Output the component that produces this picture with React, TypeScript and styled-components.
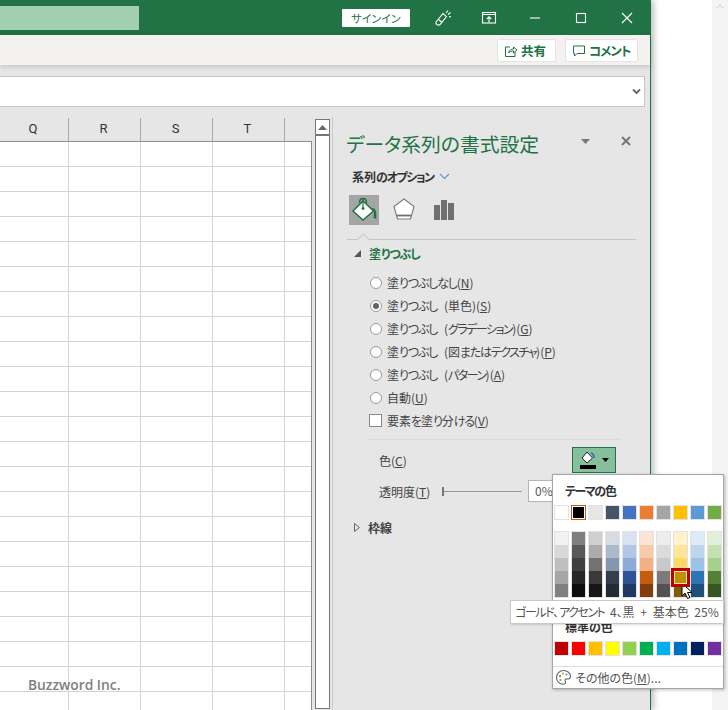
import React from 'react';
import styled, { createGlobalStyle } from 'styled-components';

const GlobalStyle = createGlobalStyle`
  html, body { margin: 0; padding: 0; background: #fff; }
  body {
    font-family: "Noto Sans CJK JP", "Noto Sans", "Liberation Sans", sans-serif;
    font-feature-settings: "palt";
  }
`;

const Page = styled.div`
  position: relative;
  width: 728px;
  height: 710px;
  overflow: hidden;
  display: flex;
  background: #fff;
`;

const Win = styled.div`
  width: 651px;
  height: 710px;
  flex: none;
  display: flex;
  flex-direction: column;
  background: #e6e6e6;
  border-right: 1px solid #217346;
  box-sizing: border-box;
  box-shadow: 3px 0 6px rgba(0, 0, 0, 0.25);
`;

const Gutter = styled.div`
  flex: 1;
`;

const RightStrip = styled.div`
  width: 16px;
  background: #f4f4f4;
  display: flex;
  justify-content: center;
  padding-top: 4px;
  box-sizing: border-box;
`;

const TitleBar = styled.div`
  height: 35px;
  flex: none;
  background: #217346;
  display: flex;
  align-items: center;
`;

const SearchBox = styled.div`
  width: 139px;
  height: 24px;
  flex: none;
  background: #a3cfb1;
  margin-right: 203px;
`;

const SignIn = styled.div`
  width: 68px;
  height: 18px;
  flex: none;
  background: #fff;
  border-radius: 1px;
  color: #217346;
  font-size: 11px;
  line-height: 18px;
  text-align: center;
  margin-right: 10px;
`;

const TitleIcon = styled.div`
  width: 46px;
  height: 35px;
  display: flex;
  align-items: center;
  justify-content: center;
  flex: none;
`;

const Ribbon = styled.div`
  height: 30px;
  flex: none;
  background: #f3f2f1;
  display: flex;
  justify-content: flex-end;
  align-items: flex-start;
  gap: 9px;
  padding: 4px 12px 0 0;
  box-sizing: border-box;
  box-shadow: 0 2px 5px rgba(0, 0, 0, 0.14);
  position: relative;
`;

const RibbonBtn = styled.div<{ $w: number }>`
  width: ${p => p.$w}px;
  height: 23px;
  background: #fff;
  border: 1px solid #e4e4e4;
  border-radius: 2px;
  box-sizing: border-box;
  display: flex;
  align-items: center;
  gap: 3px;
  padding-left: 6px;
  font-size: 12.5px;
  font-weight: 700;
  color: #217346;
`;

const TightLabel = styled.span`
  letter-spacing: -1px;
`;

const FormulaArea = styled.div`
  height: 52px;
  flex: none;
  padding: 11px 5px 0 0;
  box-sizing: border-box;
`;

const FormulaBox = styled.div`
  height: 31px;
  background: #fff;
  border: 1px solid #c6c6c6;
  border-left: none;
  box-sizing: border-box;
  display: flex;
  align-items: center;
  justify-content: flex-end;
  padding-right: 3px;
`;

const Body = styled.div`
  flex: 1;
  display: flex;
  min-height: 0;
`;

const SheetColumn = styled.div`
  width: 312px;
  flex: none;
  display: flex;
  flex-direction: column;
`;

const HeaderRow = styled.div`
  height: 25px;
  flex: none;
  display: grid;
  grid-template-columns: 69px 72px 72px 72px 27px;
  box-sizing: border-box;
  border-bottom: 1px solid #8e8e8e;
`;

const HeaderCell = styled.div`
  border-right: 1px solid #a9a9a9;
  margin-top: 1px;
  padding-right: 2px;
  font-family: "Roboto", "Liberation Sans", sans-serif;
  font-size: 13px;
  line-height: 22px;
  text-align: center;
  color: #333;
  &:last-child { border-right: none; }
`;

const Grid = styled.div`
  flex: 1;
  display: grid;
  grid-template-columns: 69px 72px 72px 72px 27px;
  grid-auto-rows: 25px;
  background: #fff;
  overflow: hidden;
  border-right: 1px solid #8e8e8e;
  box-sizing: border-box;
`;

const Cell = styled.div`
  border-right: 1px solid #d4d4d4;
  border-bottom: 1px solid #d4d4d4;
  box-sizing: border-box;
  &:nth-child(5n) { border-right: none; }
`;

const ScrollTrack = styled.div`
  width: 21px;
  flex: none;
  padding: 2px 3px 0;
  box-sizing: border-box;
  border-right: 1px solid #c9c9c9;
`;

const ScrollBar = styled.div`
  width: 15px;
  height: 590px;
  background: #fff;
  border: 1px solid #777;
  box-sizing: border-box;
`;

const ScrollBtn = styled.div`
  height: 14px;
  border-bottom: 2px solid #777;
  display: flex;
  align-items: center;
  justify-content: center;
`;

const Panel = styled.div`
  flex: 1;
  padding: 0 14px 0 14px;
  color: #444;
  font-size: 12px;
`;

const PanelHead = styled.div`
  height: 50px;
  display: flex;
  align-items: center;
  padding-top: 3px;
  box-sizing: border-box;
`;

const PanelTitle = styled.div`
  flex: 1;
  font-size: 19.8px;
  margin-left: -1px;
  color: #217346;
  white-space: nowrap;
`;

const HeadTools = styled.div`
  display: flex;
  align-items: center;
  gap: 31px;
  margin: -5px 5px 0 0;
`;

const OptionRow = styled.div`
  display: flex;
  align-items: center;
  gap: 6px;
  height: 18px;
  padding-left: 5px;
  font-size: 12px;
  font-weight: 700;
  color: #333;
`;

const TabRow = styled.div`
  display: flex;
  gap: 10px;
  margin: 10px 0 0 2px;
  height: 30px;
`;

const Tab = styled.div<{ $active?: boolean }>`
  width: 30px;
  height: 30px;
  display: flex;
  align-items: center;
  justify-content: center;
  background: ${p => (p.$active ? '#a5a5a5' : 'transparent')};
`;

const TabRule = styled.div`
  position: relative;
  height: 14px;
  border-bottom: 1px solid #c4c4c4;
  &::before {
    content: '';
    position: absolute;
    left: 12px;
    bottom: -5px;
    width: 8px;
    height: 8px;
    transform: rotate(45deg);
    background: #e6e6e6;
    border-left: 1px solid #c4c4c4;
    border-top: 1px solid #c4c4c4;
  }
`;

const SectionHead = styled.div<{ $green?: boolean }>`
  display: flex;
  align-items: center;
  gap: 8px;
  height: 20px;
  margin-top: 3px;
  padding-left: 7px;
  font-weight: 700;
  font-size: 12px;
  color: ${p => (p.$green ? '#217346' : '#444')};
`;

const FillList = styled.div`
  display: flex;
  flex-direction: column;
  padding: 8px 0 0 23px;
`;

const ChoiceRow = styled.div`
  height: 23px;
  display: flex;
  align-items: center;
  gap: 5px;
  white-space: nowrap;
  word-spacing: 4px;
  color: #444;
`;

const Radio = styled.span<{ $on?: boolean }>`
  width: 12px;
  height: 12px;
  border-radius: 50%;
  border: 1px solid #9a9a9a;
  background: #fff;
  box-sizing: border-box;
  display: flex;
  align-items: center;
  justify-content: center;
  flex: none;
  &::after {
    content: '';
    width: 6px;
    height: 6px;
    border-radius: 50%;
    background: ${p => (p.$on ? '#606060' : 'transparent')};
  }
`;

const Check = styled.span`
  width: 13px;
  height: 13px;
  border: 1px solid #8a8a8a;
  background: #fff;
  box-sizing: border-box;
  flex: none;
  margin-left: -1px;
`;

const Key = styled.span`
  text-decoration: underline;
`;

const Hira = styled.span`
  letter-spacing: -1.2px;
`;

const Kata = styled.span`
  letter-spacing: -1.5px;
`;

const ListRule = styled.div`
  height: 1px;
  background: #dcdcdc;
  margin: 7px 15px 0 21px;
`;

const ColorRow = styled.div`
  display: flex;
  align-items: center;
  height: 28px;
  margin-top: 6px;
  padding: 0 20px 0 32px;
  justify-content: space-between;
`;

const FillBtn = styled.div`
  width: 44px;
  height: 26px;
  background: #86bf9c;
  border: 1px solid #217346;
  box-sizing: border-box;
  display: flex;
  align-items: center;
  justify-content: center;
  gap: 5px;
`;

const OpacityRow = styled.div`
  display: flex;
  align-items: center;
  height: 22px;
  margin-top: 6px;
  padding-left: 32px;
`;

const OpacityLabel = styled.span`
  width: 63px;
  flex: none;
`;

const Slider = styled.div`
  width: 80px;
  height: 1px;
  flex: none;
  background: #999;
  margin-right: 6px;
  position: relative;
  &::before {
    content: '';
    position: absolute;
    left: 0;
    top: -4px;
    width: 2px;
    height: 9px;
    background: #777;
  }
`;

const PercentBox = styled.div`
  width: 40px;
  height: 22px;
  flex: none;
  background: #fff;
  border: 1px solid #b5b5b5;
  box-sizing: border-box;
  line-height: 20px;
  padding-left: 6px;
  color: #555;
`;

const BorderHead = styled(SectionHead)`
  margin-top: 15px;
`;

const Watermark = styled.div`
  position: absolute;
  left: 28px;
  top: 675px;
  font-family: "Open Sans", "Liberation Sans", sans-serif;
  font-size: 13.8px;
  font-weight: 600;
  color: #808080;
`;

const Popup = styled.div`
  position: absolute;
  left: 552px;
  top: 474px;
  width: 172px;
  height: 215px;
  background: #fff;
  border: 1px solid #a6a6a6;
  box-sizing: border-box;
  box-shadow: 1px 1px 3px rgba(0, 0, 0, 0.25);
  padding: 6px 0 0 2px;
`;

const PopupLabel = styled.div`
  font-size: 12px;
  font-weight: 700;
  color: #333;
  padding-left: 10px;
  height: 19px;
  line-height: 19px;
`;

const SwatchRow = styled.div`
  display: flex;
  gap: 4px;
`;

const ThemeSwatches = styled(SwatchRow)`
  margin-top: 6px;
`;

const StandardSwatches = styled(SwatchRow)`
  margin-top: 6px;
`;

const Swatch = styled.div<{ $selected?: boolean }>`
  width: 13px;
  height: 13px;
  flex: none;
  box-sizing: border-box;
  outline: 1px solid ${p => (p.$selected ? '#c55a11' : '#e2e2e2')};
  border: ${p => (p.$selected ? '1px solid #fff' : 'none')};
`;

const ShadeGrid = styled(SwatchRow)`
  margin-top: 13px;
`;

const ShadeColumn = styled.div`
  width: 13px;
  flex: none;
  display: flex;
  flex-direction: column;
  outline: 1px solid #e2e2e2;
`;

const Shade = styled.div<{ $hover?: boolean }>`
  height: 13px;
  position: relative;
  ${p =>
    p.$hover
      ? `outline: 3px solid #c00000; outline-offset: 0; border: 1px solid #ffe599; box-sizing: border-box; z-index: 1;`
      : ''}
`;

const StandardLabel = styled(PopupLabel)`
  margin-top: 20px;
`;

const PopupRule = styled.div`
  height: 1px;
  background: #dedede;
  margin: 11px 0 0 -2px;
`;

const MoreRow = styled.div`
  display: flex;
  align-items: center;
  gap: 3px;
  height: 21px;
  color: #555;
  font-size: 12px;
  white-space: nowrap;
`;

const Tooltip = styled.div`
  position: absolute;
  left: 510px;
  top: 600px;
  width: 214px;
  height: 24px;
  background: #fff;
  border: 1px solid #c8c8c8;
  box-sizing: border-box;
  box-shadow: 1px 1px 2px rgba(0, 0, 0, 0.15);
  font-size: 12px;
  line-height: 22px;
  word-spacing: 3px;
  color: #555;
  text-align: center;
  white-space: nowrap;
`;

const Cursor = styled.svg`
  position: absolute;
  left: 681px;
  top: 582px;
`;

const columns = ['Q', 'R', 'S', 'T', ''];

const fillChoices: { label: string; key: string; on?: boolean }[] = [
  { label: '塗りつぶしなし', key: 'N' },
  { label: '塗りつぶし (単色)', key: 'S', on: true },
  { label: '塗りつぶし (グラデーション)', key: 'G' },
  { label: '塗りつぶし (図またはテクスチャ)', key: 'P' },
  { label: '塗りつぶし (パターン)', key: 'A' },
  { label: '自動', key: 'U' },
];

const themeColors = ['#ffffff', '#000000', '#e7e6e6', '#44546a', '#4472c4', '#ed7d31', '#a5a5a5', '#ffc000', '#5b9bd5', '#70ad47'];

const shades = [
  ['#f2f2f2', '#d9d9d9', '#bfbfbf', '#a6a6a6', '#808080'],
  ['#7f7f7f', '#595959', '#404040', '#262626', '#0d0d0d'],
  ['#d0cece', '#aeaaaa', '#757171', '#3a3838', '#171616'],
  ['#d6dce4', '#adb9ca', '#8497b0', '#333f4f', '#222b35'],
  ['#d9e2f3', '#b4c6e7', '#8eaadb', '#2f5496', '#1f3864'],
  ['#fbe4d5', '#f7caac', '#f4b083', '#c55a11', '#833c0b'],
  ['#ededed', '#dbdbdb', '#c9c9c9', '#7b7b7b', '#525252'],
  ['#fff2cc', '#ffe599', '#ffd966', '#bf9000', '#7f6000'],
  ['#deeaf6', '#bdd6ee', '#9cc2e5', '#2e74b5', '#1f4e79'],
  ['#e2efd9', '#c5e0b3', '#a8d08d', '#538135', '#375623'],
];

const standardColors = ['#c00000', '#ff0000', '#ffc000', '#ffff00', '#92d050', '#00b050', '#00b0f0', '#0070c0', '#002060', '#7030a0'];

// the original UI font has much narrower kana than Noto, so tighten those runs
const fit = (text: string) =>
  text.split(/([ぁ-ん]+|[ァ-ヶー]+)/).map((part, i) => {
    if (/^[ぁ-ん]/.test(part)) return <Hira key={i}>{part}</Hira>;
    if (/^[ァ-ヶー]/.test(part)) return <Kata key={i}>{part}</Kata>;
    return part;
  });

const BucketIcon = () => (
  <svg width="28" height="28" viewBox="0 0 28 28">
    <path d="M9.500 7c0-6 7-6 7 0" stroke="#217346" strokeWidth="1.500" fill="none" />
    <path d="M13 5 L23.500 15 L13 24 L3 15 Z" fill="#fff" stroke="#217346" strokeWidth="1.500" />
    <path d="M13 3v8" stroke="#217346" strokeWidth="1.200" />
    <circle cx="13" cy="12.500" r="1.400" fill="#217346" />
    <path d="M22 12c3.500-.5 5 3.500 4.200 11.500l-1.400-1.500-1.300.5.500-6.500z" fill="#217346" />
  </svg>
);

const PentagonIcon = () => (
  <svg width="24" height="26" viewBox="0 0 24 26">
    <path d="M12 2 L22 9.500 L18.500 22 L5.500 22 L2 9.500 Z" fill="#fff" stroke="#808080" strokeWidth="1.200" />
    <path d="M4.800 18.500 H19.200" stroke="#707070" strokeWidth="1.800" />
  </svg>
);

const BarsIcon = () => (
  <svg width="22" height="22" viewBox="0 0 22 22">
    <rect x="1" y="6" width="6" height="15" fill="#707070" />
    <rect x="8" y="1" width="6" height="20" fill="#707070" />
    <rect x="15" y="4" width="6" height="17" fill="#707070" />
  </svg>
);

const Palette = () => (
  <svg width="17" height="17" viewBox="0 0 17 17">
    <path d="M8.500 1.500c4 0 7 2.600 7 6 0 2.400-2.200 2.600-3.600 2.400-1.600-.2-2.200 1-1.600 2.400.6 1.600-.2 3-2 3C4.300 15.300 1.500 12 1.500 8.500s3-7 7-7z" fill="#fff" stroke="#666" strokeWidth="1.100" />
    <circle cx="5" cy="7" r="1.100" fill="#c0504d" />
    <circle cx="8" cy="4.500" r="1.100" fill="#e0a030" />
    <circle cx="11.500" cy="5.500" r="1.100" fill="#5b9bd5" />
    <circle cx="5.500" cy="11" r="1.100" fill="#70ad47" />
  </svg>
);

export default function App() {
  return (
    <Page>
      <GlobalStyle />
      <Win>
        <TitleBar>
          <SearchBox />
          <SignIn>サインイン</SignIn>
          <TitleIcon>
            <svg width="18" height="18" viewBox="0 0 18 18" fill="none" stroke="#fff" strokeWidth="1.100">
              <path d="M2 13 L9 4.500 L12.500 7.500 L6 15.500 C4 17 1.500 15.500 2 13Z" />
              <path d="M4.500 10.500 L8 13.500 M12 4 L14 1.500 M14 5.500 L16.500 3.500 M15 8 L17 7.500" />
            </svg>
          </TitleIcon>
          <TitleIcon>
            <svg width="16" height="14" viewBox="0 0 16 14" fill="none" stroke="#fff" strokeWidth="1.100">
              <rect x="1.500" y="1.500" width="13" height="10.500" />
              <path d="M1.500 3.500H14.500M8 11.500V6M5.800 8L8 5.800 10.200 8" />
            </svg>
          </TitleIcon>
          <TitleIcon>
            <svg width="12" height="12" viewBox="0 0 12 12"><path d="M1 6H11" stroke="#fff" strokeWidth="1.100" /></svg>
          </TitleIcon>
          <TitleIcon>
            <svg width="12" height="12" viewBox="0 0 12 12"><rect x="1.500" y="1.500" width="9" height="9" fill="none" stroke="#fff" strokeWidth="1.100" /></svg>
          </TitleIcon>
          <TitleIcon>
            <svg width="12" height="12" viewBox="0 0 12 12"><path d="M1 1L11 11M11 1L1 11" stroke="#fff" strokeWidth="1.100" /></svg>
          </TitleIcon>
        </TitleBar>
        <Ribbon>
          <RibbonBtn $w={59}>
            <svg width="14" height="14" viewBox="0 0 14 14" fill="none" stroke="#217346" strokeWidth="1">
              <path d="M6 3H1.500V12.500H11V8" />
              <path d="M4.500 9C5 6.500 7 5 9.500 5V3L13 6L9.500 9V7C7.500 7 5.500 7.500 4.500 9Z" />
            </svg>
            共有
          </RibbonBtn>
          <RibbonBtn $w={73}>
            <svg width="14" height="14" viewBox="0 0 14 14" fill="none" stroke="#217346" strokeWidth="1">
              <path d="M1.500 2H12.500V9.500H5L2.500 12V9.500H1.500Z" />
            </svg>
            <TightLabel>コメント</TightLabel>
          </RibbonBtn>
        </Ribbon>
        <FormulaArea>
          <FormulaBox>
            <svg width="9" height="7" viewBox="0 0 9 7"><path d="M1 1.500L4.500 5L8 1.500" fill="none" stroke="#666" strokeWidth="1.800" /></svg>
          </FormulaBox>
        </FormulaArea>
        <Body>
          <SheetColumn>
            <HeaderRow>
              {columns.map((c, i) => (
                <HeaderCell key={i}>{c}</HeaderCell>
              ))}
            </HeaderRow>
            <Grid>
              {Array.from({ length: 120 }).map((_, i) => (
                <Cell key={i} />
              ))}
            </Grid>
          </SheetColumn>
          <ScrollTrack>
            <ScrollBar>
              <ScrollBtn>
                <svg width="9" height="5" viewBox="0 0 9 5"><path d="M4.500 0L9 5H0Z" fill="#666" /></svg>
              </ScrollBtn>
            </ScrollBar>
          </ScrollTrack>
          <Panel>
            <PanelHead>
              <PanelTitle>データ系列の書式設定</PanelTitle>
              <HeadTools>
                <svg width="9" height="5" viewBox="0 0 9 5"><path d="M0 0H9L4.500 5Z" fill="#777" /></svg>
                <svg width="10" height="10" viewBox="0 0 10 10"><path d="M1 1L9 9M9 1L1 9" stroke="#777" strokeWidth="2" /></svg>
              </HeadTools>
            </PanelHead>
            <OptionRow>
              <span>{fit('系列のオプション')}</span>
              <svg width="11" height="7" viewBox="0 0 11 7"><path d="M1 1L5.500 5.500L10 1" fill="none" stroke="#5b9bd5" strokeWidth="1.200" /></svg>
            </OptionRow>
            <TabRow>
              <Tab $active><BucketIcon /></Tab>
              <Tab><PentagonIcon /></Tab>
              <Tab><BarsIcon /></Tab>
            </TabRow>
            <TabRule />
            <SectionHead $green>
              <svg width="7" height="7" viewBox="0 0 7 7"><path d="M7 0V7H0Z" fill="#555" /></svg>
              <span>{fit('塗りつぶし')}</span>
            </SectionHead>
            <FillList>
              {fillChoices.map(c => (
                <ChoiceRow key={c.key}>
                  <Radio $on={c.on} />
                  <span>
                    {fit(c.label)}(<Key>{c.key}</Key>)
                  </span>
                </ChoiceRow>
              ))}
              <ChoiceRow>
                <Check />
                <span>
                  {fit('要素を塗り分ける')}(<Key>V</Key>)
                </span>
              </ChoiceRow>
            </FillList>
            <ListRule />
            <ColorRow>
              <span>
                色(<Key>C</Key>)
              </span>
              <FillBtn>
                <svg width="18" height="20" viewBox="0 0 18 20">
                  <path d="M8 2L13.500 8L8 13L3 8Z" fill="#fff" stroke="#222" strokeWidth="1" />
                  <path d="M12 3c2 .5 3 2 3 5" fill="none" stroke="#1f6fa8" strokeWidth="1.500" />
                  <rect x="1" y="15" width="16" height="4" fill="#000" />
                </svg>
                <svg width="7" height="4" viewBox="0 0 7 4"><path d="M0 0H7L3.500 4Z" fill="#000" /></svg>
              </FillBtn>
            </ColorRow>
            <OpacityRow>
              <OpacityLabel>
                透明度(<Key>T</Key>)
              </OpacityLabel>
              <Slider />
              <PercentBox>0%</PercentBox>
            </OpacityRow>
            <BorderHead>
              <svg width="6" height="9" viewBox="0 0 6 9"><path d="M.5 .5L5.500 4.500L.5 8.500Z" fill="none" stroke="#666" /></svg>
              枠線
            </BorderHead>
          </Panel>
        </Body>
      </Win>
      <Gutter />
      <RightStrip>
        <svg width="8" height="5" viewBox="0 0 8 5"><path d="M.5 4.500L4 1L7.500 4.500" fill="none" stroke="#ddd" strokeWidth="1.500" /></svg>
      </RightStrip>

      <Watermark>Buzzword Inc.</Watermark>

      <Popup>
        <PopupLabel>{fit('テーマの色')}</PopupLabel>
        <ThemeSwatches>
          {themeColors.map((c, i) => (
            <Swatch key={c} $selected={i === 1} style={{ background: c }} />
          ))}
        </ThemeSwatches>
        <ShadeGrid>
          {shades.map((col, x) => (
            <ShadeColumn key={x}>
              {col.map((c, y) => (
                <Shade key={c} $hover={x === 7 && y === 3} style={{ background: c }} />
              ))}
            </ShadeColumn>
          ))}
        </ShadeGrid>
        <StandardLabel>標準の色</StandardLabel>
        <StandardSwatches>
          {standardColors.map(c => (
            <Swatch key={c} style={{ background: c }} />
          ))}
        </StandardSwatches>
        <PopupRule />
        <MoreRow>
          <Palette />
          <span>
            その他の色(<Key>M</Key>)...
          </span>
        </MoreRow>
      </Popup>

      <Tooltip>{fit('ゴールド、アクセント 4、黒 + 基本色 25%')}</Tooltip>

      <Cursor width="14" height="18" viewBox="0 0 14 18">
        <path d="M1 1V14L4 11L6.500 16.500L9 15.500L6.500 10.500H11Z" fill="#fff" stroke="#000" strokeWidth="1" />
      </Cursor>
    </Page>
  );
}
